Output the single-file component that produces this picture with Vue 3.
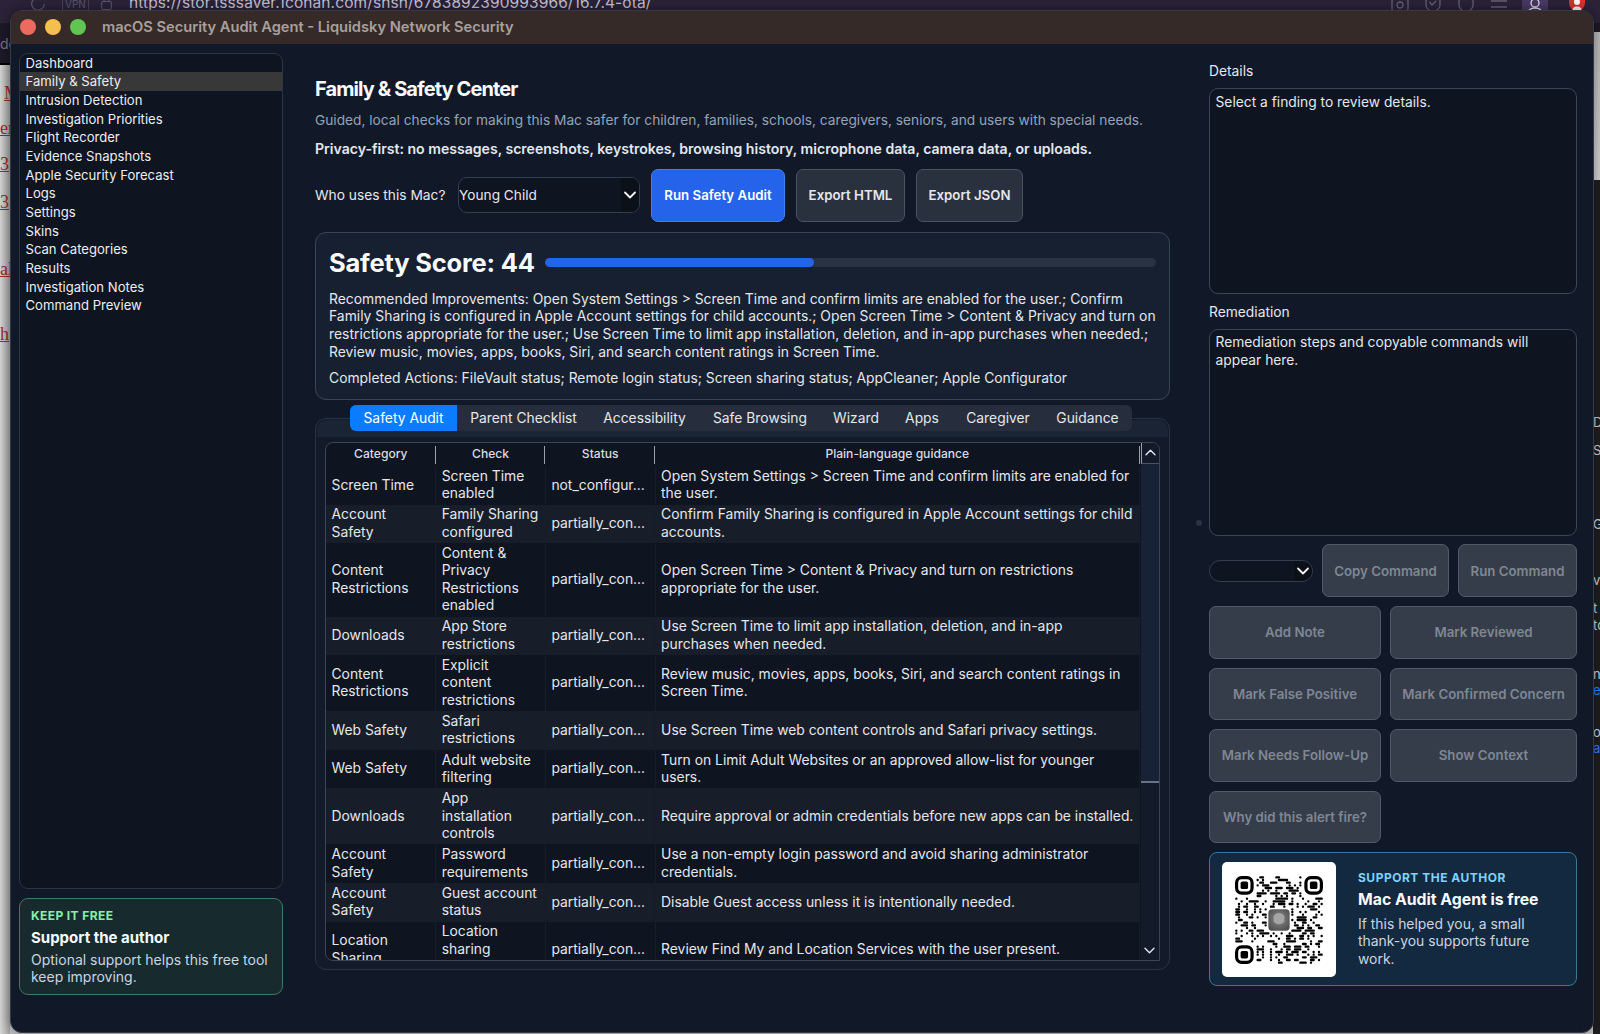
<script setup>
const navItems = ['Dashboard','Family & Safety','Intrusion Detection','Investigation Priorities','Flight Recorder','Evidence Snapshots','Apple Security Forecast','Logs','Settings','Skins','Scan Categories','Results','Investigation Notes','Command Preview']
const tabs = ['Safety Audit','Parent Checklist','Accessibility','Safe Browsing','Wizard','Apps','Caregiver','Guidance']
const rows = [
  ['Screen Time','Screen Time enabled','not_configur...','Open System Settings > Screen Time and confirm limits are enabled for the user.'],
  ['Account Safety','Family Sharing configured','partially_con...','Confirm Family Sharing is configured in Apple Account settings for child accounts.'],
  ['Content Restrictions','Content & Privacy Restrictions enabled','partially_con...','Open Screen Time > Content & Privacy and turn on restrictions appropriate for the user.'],
  ['Downloads','App Store restrictions','partially_con...','Use Screen Time to limit app installation, deletion, and in-app purchases when needed.'],
  ['Content Restrictions','Explicit content restrictions','partially_con...','Review music, movies, apps, books, Siri, and search content ratings in Screen Time.'],
  ['Web Safety','Safari restrictions','partially_con...','Use Screen Time web content controls and Safari privacy settings.'],
  ['Web Safety','Adult website filtering','partially_con...','Turn on Limit Adult Websites or an approved allow-list for younger users.'],
  ['Downloads','App installation controls','partially_con...','Require approval or admin credentials before new apps can be installed.'],
  ['Account Safety','Password requirements','partially_con...','Use a non-empty login password and avoid sharing administrator credentials.'],
  ['Account Safety','Guest account status','partially_con...','Disable Guest access unless it is intentionally needed.'],
  ['Location Sharing','Location sharing settings','partially_con...','Review Find My and Location Services with the user present.']
]
const N = 33
let seed = 73921
const rnd = () => { seed = (seed * 16807) % 2147483647; return seed / 2147483647 }
const inFinder = (x, y) => (x < 8 && y < 8) || (x > N - 9 && y < 8) || (x < 8 && y > N - 9)
const inLogo = (x, y) => x >= 12 && x <= 20 && y >= 12 && y <= 20
let d = ''
for (let y = 0; y < N; y++) {
  let run = -1
  for (let x = 0; x <= N; x++) {
    const on = x < N && !inFinder(x, y) && !inLogo(x, y) && rnd() < 0.42
    if (on && run < 0) run = x
    if (!on && run >= 0) { d += `M${run + 0.5} ${y + 0.5}h${x - run - 1}`; run = -1 }
  }
}
const qrPath = d
const finders = [[0, 0], [26, 0], [0, 26]]
</script>

<template>
  <div class="desk">
    <div class="browser-bar">
      <svg class="reload" viewBox="0 0 20 20"><path d="M15 6a7 7 0 1 0 2 5" fill="none" stroke="#5f5870" stroke-width="1.4"/></svg>
      <span class="vpn">VPN</span>
      <svg class="lock" viewBox="0 0 16 20"><rect x="2" y="8" width="12" height="10" rx="1.5" fill="none" stroke="#5f5870" stroke-width="1.3"/><path d="M5 8V5a3 3 0 0 1 6 0v3" fill="none" stroke="#5f5870" stroke-width="1.3"/></svg>
      <span class="url">https://stor.tsssaver.1conan.com/shsh/6783892390993966/16.7.4-ota/</span>
      <div class="bar-icons">
        <svg viewBox="0 0 20 20"><rect x="2" y="-2" width="16" height="14" rx="3" fill="none" stroke="#6a6378" stroke-width="1.3"/><circle cx="10" cy="5" r="3" fill="none" stroke="#6a6378" stroke-width="1.3"/></svg>
        <svg viewBox="0 0 20 20"><path d="M3-2v7c0 4 4 6 7 7 3-1 7-3 7-7v-7z" fill="none" stroke="#6a6378" stroke-width="1.3"/><path d="M6.500 2l2.500 3 4-4" fill="none" stroke="#6a6378" stroke-width="1.300"/></svg>
        <svg viewBox="0 0 20 20"><path d="M3-2v7c0 4 4 6 7 7 3-1 7-3 7-7v-7z" fill="none" stroke="#6a6378" stroke-width="1.3"/></svg>
        <svg viewBox="0 0 20 20"><path d="M2 1h16M2 7h16" stroke="#6a6378" stroke-width="1.3"/></svg>
        <span class="person-tile"><svg viewBox="0 0 20 20"><circle cx="10" cy="3" r="4" fill="none" stroke="#e5e3ea" stroke-width="1.3"/><path d="M3 14c0-5 3-6 7-6s7 1 7 6" fill="none" stroke="#e5e3ea" stroke-width="1.3"/></svg></span>
        <span class="avatar"><svg viewBox="0 0 16 11"><circle cx="8" cy="2" r="3" fill="#fff"/><path d="M3 11c0-3 2-4.500 5-4.500s5 1.500 5 4.500z" fill="#fff"/></svg></span>
      </div>
    </div>
    <div class="browser-tabs"><span class="dg">dg</span></div>
    <div class="page-left">
      <span class="frag f1">M</span><span class="frag f2">er</span><span class="frag f3">3</span><span class="frag f4">3</span><span class="frag f5">ale</span><span class="frag f6">h</span>
    </div>
    <div class="page-right">
      <span class="rf r1">D</span><span class="rf r2">S</span><span class="rf r3">G</span><span class="rf r4">va</span><span class="rf r5">t</span><span class="rf r6">to</span><span class="rf r7">n</span><span class="rf r8 blue">e</span><span class="rf r9">o</span><span class="rf r10 blue">a</span>
    </div>

    <div class="window">
      <header class="titlebar">
        <span class="light red"></span><span class="light yellow"></span><span class="light green"></span>
        <span class="wtitle">macOS Security Audit Agent - Liquidsky Network Security</span>
      </header>
      <div class="body">
        <aside class="left">
          <nav class="nav">
            <div v-for="(item, i) in navItems" :key="item" class="nav-item" :class="{ active: i === 1 }">{{ item }}</div>
          </nav>
          <div class="keep">
            <div class="keep-label">KEEP IT FREE</div>
            <div class="keep-title">Support the author</div>
            <div class="keep-text">Optional support helps this free tool keep improving.</div>
          </div>
        </aside>

        <main class="main">
          <h1>Family &amp; Safety Center</h1>
          <p class="sub">Guided, local checks for making this Mac safer for children, families, schools, caregivers, seniors, and users with special needs.</p>
          <p class="privacy">Privacy-first: no messages, screenshots, keystrokes, browsing history, microphone data, camera data, or uploads.</p>
          <div class="who">
            <span class="who-label">Who uses this Mac?</span>
            <div class="select who-select">
              <span>Young Child</span>
              <span class="chev-box"><svg viewBox="0 0 14 10"><path d="M2 2.500l5 5 5-5" fill="none" stroke="#f3f4f6" stroke-width="1.800" stroke-linecap="round" stroke-linejoin="round"/></svg></span>
            </div>
            <button class="btn primary run">Run Safety Audit</button>
            <button class="btn export e1">Export HTML</button>
            <button class="btn export e2">Export JSON</button>
          </div>
          <section class="score">
            <div class="score-head">
              <span class="score-title">Safety Score: 44</span>
              <div class="track"><div class="fill" :style="{ width: '44%' }"></div></div>
            </div>
            <p class="improve">Recommended Improvements: Open System Settings &gt; Screen Time and confirm limits are enabled for the user.; Confirm Family Sharing is configured in Apple Account settings for child accounts.; Open Screen Time &gt; Content &amp; Privacy and turn on restrictions appropriate for the user.; Use Screen Time to limit app installation, deletion, and in-app purchases when needed.; Review music, movies, apps, books, Siri, and search content ratings in Screen Time.</p>
            <p class="done">Completed Actions: FileVault status; Remote login status; Screen sharing status; AppCleaner; Apple Configurator</p>
          </section>
          <section class="pane">
            <div class="tabbar">
              <div v-for="(t, i) in tabs" :key="t" class="tab" :class="['t' + i, { on: i === 0 }]">{{ t }}</div>
            </div>
            <div class="table-box">
              <div class="table-clip">
                <table>
                  <colgroup><col class="c1"><col class="c2"><col class="c3"><col class="c4"></colgroup>
                  <thead>
                    <tr><th>Category</th><th>Check</th><th>Status</th><th>Plain-language guidance</th></tr>
                  </thead>
                  <tbody>
                    <tr v-for="(r, i) in rows" :key="i" :class="{ alt: i % 2 === 1 }">
                      <td v-for="(c, j) in r" :key="j">{{ c }}</td>
                    </tr>
                  </tbody>
                </table>
              </div>
              <div class="scrollbar">
                <div class="sb-up"><svg viewBox="0 0 14 10"><path d="M2 7.500l5-5 5 5" fill="none" stroke="#e5e7eb" stroke-width="1.500" stroke-linecap="round" stroke-linejoin="round"/></svg></div>
                <div class="sb-thumb"></div>
                <div class="sb-down"><svg viewBox="0 0 14 10"><path d="M2 2.500l5 5 5-5" fill="none" stroke="#e5e7eb" stroke-width="1.500" stroke-linecap="round" stroke-linejoin="round"/></svg></div>
              </div>
            </div>
          </section>
        </main>

        <aside class="right">
          <span class="handle"></span>
          <div class="rlabel">Details</div>
          <div class="textbox first">Select a finding to review details.</div>
          <div class="rlabel second">Remediation</div>
          <div class="textbox last">Remediation steps and copyable commands will appear here.</div>
          <div class="cmds">
            <div class="select cmd-select">
              <span class="chev-box"><svg viewBox="0 0 14 10"><path d="M2 2.500l5 5 5-5" fill="none" stroke="#f3f4f6" stroke-width="1.800" stroke-linecap="round" stroke-linejoin="round"/></svg></span>
            </div>
            <button class="btn off">Copy Command</button>
            <button class="btn off">Run Command</button>
          </div>
          <div class="actions">
            <button class="btn off">Add Note</button>
            <button class="btn off">Mark Reviewed</button>
            <button class="btn off">Mark False Positive</button>
            <button class="btn off">Mark Confirmed Concern</button>
            <button class="btn off">Mark Needs Follow-Up</button>
            <button class="btn off">Show Context</button>
            <button class="btn off">Why did this alert fire?</button>
          </div>
          <div class="support">
            <div class="qr">
              <svg viewBox="0 0 33 33">
                <path :d="qrPath" fill="none" stroke="#000" stroke-width="0.900" stroke-linecap="round"/>
                <g v-for="f in finders" :key="f[0] + '-' + f[1]">
                  <rect :x="f[0] + 0.6" :y="f[1] + 0.6" width="5.8" height="5.800" rx="1.900" fill="none" stroke="#000" stroke-width="1.200"/>
                  <rect :x="f[0] + 2.1" :y="f[1] + 2.1" width="2.800" height="2.800" rx="0.600" fill="#000"/>
                </g>
                <rect x="12.500" y="12.500" width="8" height="8" rx="1.500" fill="url(#face)"/>
                <path d="M14.500 15c1-1.500 3-1.500 4 0v2c-.6 1.500-3.400 1.500-4 0z" fill="#a5a5a5"/>
                <defs>
                  <radialGradient id="face" cx="50%" cy="45%" r="65%"><stop offset="0" stop-color="#8c8c8c"/><stop offset="0.500" stop-color="#6c6c6c"/><stop offset="1" stop-color="#4d4d4d"/></radialGradient>
                </defs>
              </svg>
            </div>
            <div class="support-text">
              <div class="support-label">SUPPORT THE AUTHOR</div>
              <div class="support-title">Mac Audit Agent is free</div>
              <div class="support-body">If this helped you, a small thank-you supports future work.</div>
            </div>
          </div>
        </aside>
      </div>
    </div>
  </div>
</template>

<style>
html, body { margin: 0; background: #1a1522; }
</style>

<style scoped>
* { box-sizing: border-box; }
.desk { position: relative; width: 1600px; height: 1034px; overflow: hidden; background: #c9c9c9; font-family: Inter, "Liberation Sans", sans-serif; font-size: 14px; }

.browser-bar { position: absolute; left: 0; top: 0; width: 100%; height: 23px; background: #2c2339; overflow: hidden; }
.reload { position: absolute; left: 29px; top: -6px; width: 18px; height: 18px; }
.vpn { position: absolute; left: 62px; top: -3px; color: #5f5870; font-size: 10px; border: 1px solid #4a4358; padding: 0 2px; }
.lock { position: absolute; left: 100px; top: -5px; width: 13px; height: 16px; }
.url { position: absolute; left: 129px; top: -7px; color: #c9c5d3; font-size: 15.5px; letter-spacing: 0.1px; white-space: nowrap; }
.bar-icons { position: absolute; left: 1390px; top: 0; width: 200px; height: 11px; display: flex; gap: 13px; }
.bar-icons svg { width: 20px; height: 20px; flex: none; }
.person-tile { position: relative; width: 26px; height: 11px; background: #4a3a66; display: flex; justify-content: center; flex: none; }
.avatar { width: 16px; height: 11px; border-radius: 0 0 8px 8px; background: #d9352f; margin-left: 8px; flex: none; overflow: hidden; }
.avatar svg { display: block; width: 16px; height: 11px; }
.browser-tabs { position: absolute; left: 0; top: 23px; width: 100%; height: 42px; background: #1d1927; border-bottom: 2px solid #000; color: #7d7888; }
.dg { position: absolute; left: 0; top: 12px; font-size: 14px; }
.page-left { position: absolute; left: 0; top: 65px; width: 10px; height: 969px; background: linear-gradient(90deg, #d8d8d8, #a8a8a8); }
.frag { position: absolute; color: #9b2b2b; font-family: "Liberation Serif", serif; font-size: 18px; text-decoration: underline; white-space: nowrap; }
.f1 { left: 4px; top: 18px; } .f2 { left: 0; top: 53px; } .f3 { left: 0; top: 89px; } .f4 { left: 0; top: 127px; } .f5 { left: 0; top: 194px; } .f6 { left: 0; top: 259px; }
.page-right { position: absolute; left: 1593px; top: 32px; width: 7px; height: 1002px; background: #1f1f22; color: #d8d8d8; font-size: 13px; overflow: hidden; }
.page-right::before { content: ""; position: absolute; left: 0; top: 0; width: 100%; height: 148px; background: linear-gradient(180deg, #bdbdbd, #d8d8d8); }
.rf { position: absolute; left: 0; white-space: nowrap; }
.blue { color: #3b82f6; }
.r1 { top: 382px; } .r2 { top: 410px; } .r3 { top: 484px; } .r4 { top: 540px; } .r5 { top: 568px; } .r6 { top: 585px; } .r7 { top: 634px; } .r8 { top: 650px; } .r9 { top: 692px; } .r10 { top: 708px; }

.window { position: absolute; left: 10px; top: 9.5px; width: 1583.500px; height: 1023.500px; border-radius: 12px; overflow: hidden; background: #111929; border: 1px solid #343b48; box-shadow: 0 0 14px rgba(0, 0, 0, 0.45); display: flex; flex-direction: column; }
.titlebar { height: 33.500px; flex: none; background: #352a28; display: flex; align-items: center; padding-left: 8.500px; gap: 9px; }
.light { width: 16px; height: 16px; border-radius: 50%; flex: none; }
.red { background: #ed6a5e; } .yellow { background: #f5bf4f; } .green { background: #61c554; }
.wtitle { margin-left: 7.500px; color: #a8a09c; font-size: 14.650px; font-weight: 600; white-space: nowrap; }
.body { flex: 1; min-height: 0; display: grid; grid-template-columns: 264px 855px 368px; column-gap: 32.500px; padding-left: 7.500px; position: relative; }

.left { display: flex; flex-direction: column; padding: 8.500px 0 37px; gap: 9px; min-height: 0; }
.nav { flex: 1; background: #0e1420; border: 1px solid #2c3545; border-radius: 9px; overflow: hidden; }
.nav-item { height: 18.700px; line-height: 18.700px; padding-left: 6px; color: #eceef1; font-size: 13.100px; white-space: nowrap; }
.nav-item.active { background: #383838; }
.keep { height: 97px; flex: none; background: #172b2f; border: 1px solid #3e7a60; border-radius: 9px; padding: 9px 11.500px; }
.keep-label { color: #86efac; font-size: 12px; font-weight: 700; letter-spacing: 0.4px; line-height: 16px; }
.keep-title { color: #f8fafc; font-size: 15px; font-weight: 700; line-height: 20px; margin-top: 4px; }
.keep-text { color: #cbd5e1; font-size: 14px; line-height: 17.500px; margin-top: 2.500px; }

.main { padding-top: 32.500px; color: #e5e7eb; min-width: 0; margin-left: 0; }
h1 { margin: 0; height: 24px; line-height: 24px; font-size: 20px; font-weight: 700; letter-spacing: -0.9px; color: #f8fafc; }
.sub { margin: 10px 0 0; line-height: 18px; color: #94a3b8; font-size: 13.720px; white-space: nowrap; }
.privacy { margin: 11px 0 0; line-height: 18px; color: #e2e8f0; font-size: 14.080px; font-weight: 600; white-space: nowrap; }
.who { margin-top: 11px; height: 53px; display: flex; align-items: center; }
.who-label { width: 143px; flex: none; font-size: 13.750px; color: #e5e7eb; white-space: nowrap; }
.select { background: #0e1420; border: 1px solid #343d4d; border-radius: 9px; display: flex; align-items: center; justify-content: space-between; overflow: hidden; color: #e5e7eb; }
.who-select { width: 182px; height: 36px; padding-left: 0; font-size: 13.700px; flex: none; }
.chev-box { width: 18px; height: 100%; background: #0b1019; display: flex; align-items: center; justify-content: center; margin-left: auto; flex: none; }
.chev-box svg { width: 14px; height: 10px; }
.btn { font-family: inherit; font-size: 13.250px; font-weight: 600; border-radius: 7px; white-space: nowrap; padding: 0; height: 53px; }
.primary { background: #2563eb; border: 1px solid #3f7ff0; color: #fff; }
.run { width: 134px; margin-left: 11px; flex: none; }
.export { background: #2a313e; border: 1px solid #4a5362; color: #e5e7eb; flex: none; }
.e1 { width: 109px; margin-left: 11px; }
.e2 { width: 107px; margin-left: 11px; }
.score { margin-top: 10px; height: 168px; background: #162031; border: 1px solid #3a4556; border-radius: 11px; padding: 14px 13px 0; }
.score-head { display: flex; align-items: center; height: 32px; gap: 10px; }
.score-title { font-size: 25.500px; font-weight: 700; color: #f8fafc; letter-spacing: -0.2px; white-space: nowrap; }
.track { flex: 1; height: 9px; background: #283242; border-radius: 5px; overflow: hidden; }
.fill { height: 100%; background: #2563eb; border-radius: 5px; }
.improve { margin: 12px 0 0; font-size: 13.880px; line-height: 17.700px; color: #e5e7eb; }
.done { margin: 9px 0 0; font-size: 13.880px; line-height: 17.500px; color: #e5e7eb; white-space: nowrap; }

.pane { position: relative; margin-top: 18px; height: 552px; background: #131b2b; border: 1px solid #2a3342; border-radius: 11px; padding: 23px 9.500px 0 9px; }
.pane::before { content: ""; position: absolute; left: 1px; right: 1px; top: 1px; height: 17px; background: #1b2434; border-radius: 10px 10px 0 0; }
.tabbar { position: absolute; left: 34px; top: -14px; width: 782px; height: 26px; background: #262e3d; border-radius: 6px; display: flex; }
.tab { height: 100%; display: flex; align-items: center; justify-content: center; color: #e5e7eb; font-size: 13.850px; white-space: nowrap; flex: none; }
.tab.on { background: #0a7cff; color: #fff; border-radius: 6px 0 0 6px; }
.t0 { width: 107px; } .t1 { width: 133px; } .t2 { width: 109px; } .t3 { width: 122px; } .t4 { width: 70px; } .t5 { width: 62px; } .t6 { width: 90px; } .t7 { width: 89px; }
.table-box { position: relative; height: 519px; background: #0e1420; border: 1px solid #3a4556; border-radius: 8px 8px 0 8px; display: flex; overflow: hidden; }
.table-clip { width: 814px; flex: none; overflow: hidden; }
table { width: 814px; table-layout: fixed; border-collapse: collapse; color: #e5e7eb; font-size: 13.860px; line-height: 17.400px; }
.c1, .c2, .c3 { width: 109.700px; }
th { height: 23.500px; padding: 0; font-size: 12.100px; font-weight: 500; color: #d8dce2; position: relative; line-height: 16px; vertical-align: top; padding-top: 3px; }
th::after { content: ""; position: absolute; right: 0; top: 3px; bottom: 2px; width: 1px; background: #9aa1ac; }
td { padding: 1.900px 5.500px; vertical-align: middle; border-right: 1px solid #161c28; }
td:nth-child(3) { white-space: nowrap; }
.alt { background: #181e29; }
.scrollbar { flex: 1; display: flex; flex-direction: column; background: #131b2b; position: relative; border-left: 1px solid #0e1420; }
.sb-up { height: 21px; display: flex; align-items: center; justify-content: center; border-bottom: 1px solid #4a5362; border-left: 1px solid #9aa1ac; }
.sb-up svg, .sb-down svg { width: 13px; height: 9px; }
.sb-thumb { height: 319px; background: #182236; border-bottom: 2px solid #6b7280; }
.sb-down { margin-top: auto; height: 18px; display: flex; align-items: center; justify-content: center; }

.right { position: relative; padding-top: 18px; padding-right: 0; color: #e5e7eb; margin-left: 6.500px; width: 368px; }
.handle { position: absolute; left: -13px; top: 476px; width: 6px; height: 6px; border-radius: 50%; background: #293344; }
.rlabel { line-height: 18px; font-size: 13.800px; color: #e5e7eb; }
.rlabel.second { margin-top: 9px; }
.textbox { margin-top: 8px; background: #0e1420; border: 1px solid #3a4556; border-radius: 9px; padding: 4.500px 5.500px; font-size: 13.800px; line-height: 17.500px; color: #e5e7eb; }
.textbox.first { height: 205.500px; }
.textbox.last { height: 207.500px; }
.cmds { margin-top: 8px; display: flex; align-items: center; gap: 9px; }
.cmd-select { width: 104px; height: 22px; flex: none; border-radius: 11px; }
.cmds .btn:nth-child(2) { width: 127px; margin-left: 0; }
.cmds .btn:nth-child(3) { width: 119px; }
.off { background: #363d4a; border: 1px solid #4f5a6b; color: #7f8793; }
.actions { margin-top: 9px; display: grid; grid-template-columns: 172px 187px; grid-auto-rows: 52.500px; gap: 9px; }
.actions .btn { height: 100%; }
.support { margin-top: 9px; height: 134px; background: #13293f; border: 1px solid #3a7796; border-radius: 8px; display: flex; align-items: center; padding-left: 12px; }
.qr { width: 114px; height: 115px; flex: none; background: #fff; border-radius: 5px; padding: 14px 13px; }
.qr svg { display: block; width: 88px; height: 88px; }
.support-text { margin-left: 22px; }
.support-label { color: #7dd3fc; font-size: 12px; font-weight: 700; letter-spacing: 0.5px; line-height: 16px; }
.support-title { color: #f8fafc; font-size: 15.800px; font-weight: 700; line-height: 20px; margin-top: 4px; white-space: nowrap; }
.support-body { color: #cbd5e1; font-size: 13.900px; line-height: 17.500px; margin-top: 5.500px; width: 190px; }
</style>
